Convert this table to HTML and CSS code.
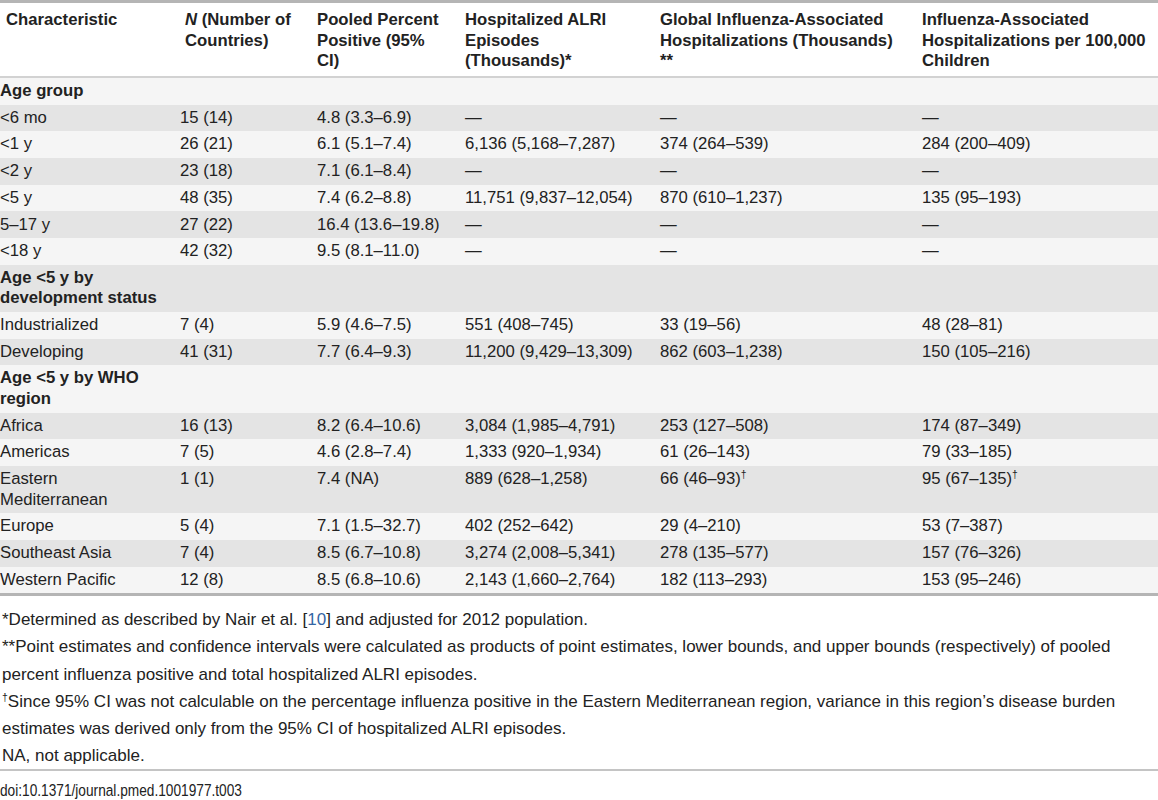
FILE: index.html
```html
<!DOCTYPE html>
<html lang="en">
<head>
    <meta charset="UTF-8">
    <meta name="viewport" content="width=device-width, initial-scale=1.0">
    <title>Table 3. Influenza-associated hospitalizations in children</title>
    <link rel="stylesheet" href="styles.css">
</head>
<body>
    <div class="table-wrap">
        <table class="data-table">
            <colgroup>
                <col class="col-char">
                <col class="col-n">
                <col class="col-pooled">
                <col class="col-alri">
                <col class="col-global">
                <col class="col-rate">
            </colgroup>
            <thead>
                <tr>
                    <th class="first">Characteristic</th>
                    <th class="second"><em>N</em> (Number of<br>Countries)</th>
                    <th>Pooled Percent<br>Positive (95%<br>CI)</th>
                    <th>Hospitalized ALRI<br>Episodes<br>(Thousands)*</th>
                    <th>Global Influenza-Associated<br>Hospitalizations (Thousands)<br>**</th>
                    <th>Influenza-Associated<br>Hospitalizations per 100,000<br>Children</th>
                </tr>
            </thead>
            <tbody>
                <tr class="group">
                    <td>Age group</td><td></td><td></td><td></td><td></td><td></td>
                </tr>
                <tr>
                    <td>&lt;6 mo</td><td>15 (14)</td><td>4.8 (3.3–6.9)</td><td>—</td><td>—</td><td>—</td>
                </tr>
                <tr>
                    <td>&lt;1 y</td><td>26 (21)</td><td>6.1 (5.1–7.4)</td><td>6,136 (5,168–7,287)</td><td>374 (264–539)</td><td>284 (200–409)</td>
                </tr>
                <tr>
                    <td>&lt;2 y</td><td>23 (18)</td><td>7.1 (6.1–8.4)</td><td>—</td><td>—</td><td>—</td>
                </tr>
                <tr>
                    <td>&lt;5 y</td><td>48 (35)</td><td>7.4 (6.2–8.8)</td><td>11,751 (9,837–12,054)</td><td>870 (610–1,237)</td><td>135 (95–193)</td>
                </tr>
                <tr>
                    <td>5–17 y</td><td>27 (22)</td><td>16.4 (13.6–19.8)</td><td>—</td><td>—</td><td>—</td>
                </tr>
                <tr>
                    <td>&lt;18 y</td><td>42 (32)</td><td>9.5 (8.1–11.0)</td><td>—</td><td>—</td><td>—</td>
                </tr>
                <tr class="group">
                    <td>Age &lt;5 y by development status</td><td></td><td></td><td></td><td></td><td></td>
                </tr>
                <tr>
                    <td>Industrialized</td><td>7 (4)</td><td>5.9 (4.6–7.5)</td><td>551 (408–745)</td><td>33 (19–56)</td><td>48 (28–81)</td>
                </tr>
                <tr>
                    <td>Developing</td><td>41 (31)</td><td>7.7 (6.4–9.3)</td><td>11,200 (9,429–13,309)</td><td>862 (603–1,238)</td><td>150 (105–216)</td>
                </tr>
                <tr class="group">
                    <td>Age &lt;5 y by WHO region</td><td></td><td></td><td></td><td></td><td></td>
                </tr>
                <tr>
                    <td>Africa</td><td>16 (13)</td><td>8.2 (6.4–10.6)</td><td>3,084 (1,985–4,791)</td><td>253 (127–508)</td><td>174 (87–349)</td>
                </tr>
                <tr>
                    <td>Americas</td><td>7 (5)</td><td>4.6 (2.8–7.4)</td><td>1,333 (920–1,934)</td><td>61 (26–143)</td><td>79 (33–185)</td>
                </tr>
                <tr>
                    <td>Eastern Mediterranean</td><td>1 (1)</td><td>7.4 (NA)</td><td>889 (628–1,258)</td><td>66 (46–93)<sup>†</sup></td><td>95 (67–135)<sup>†</sup></td>
                </tr>
                <tr>
                    <td>Europe</td><td>5 (4)</td><td>7.1 (1.5–32.7)</td><td>402 (252–642)</td><td>29 (4–210)</td><td>53 (7–387)</td>
                </tr>
                <tr>
                    <td>Southeast Asia</td><td>7 (4)</td><td>8.5 (6.7–10.8)</td><td>3,274 (2,008–5,341)</td><td>278 (135–577)</td><td>157 (76–326)</td>
                </tr>
                <tr>
                    <td>Western Pacific</td><td>12 (8)</td><td>8.5 (6.8–10.6)</td><td>2,143 (1,660–2,764)</td><td>182 (113–293)</td><td>153 (95–246)</td>
                </tr>
            </tbody>
        </table>

        <div class="footnotes">
            <p>*Determined as described by Nair et al. [<a href="#ref10">10</a>] and adjusted for 2012 population.</p>
            <p>**Point estimates and confidence intervals were calculated as products of point estimates, lower bounds, and upper bounds (respectively) of pooled percent influenza positive and total hospitalized ALRI episodes.</p>
            <p><sup>†</sup>Since 95% CI was not calculable on the percentage influenza positive in the Eastern Mediterranean region, variance in this region’s disease burden estimates was derived only from the 95% CI of hospitalized ALRI episodes.</p>
            <p>NA, not applicable.</p>
        </div>

        <div class="doi"><span class="doi-text">doi:10.1371/journal.pmed.1001977.t003</span></div>
    </div>
</body>
</html>
```

FILE: styles.css
```css
body {
    margin: 0;
    padding: 0;
    background-color: #fff;
    color: #222;
    font-family: "Liberation Sans", Arial, sans-serif;
}

.table-wrap {
    width: 1158px;
}

.data-table {
    width: 100%;
    table-layout: fixed;
    border-collapse: separate;
    border-spacing: 0;
    border-top: 3px solid #b5b5b5;
    border-bottom: 3px solid #b5b5b5;
    font-size: 16.7px;
    line-height: 20.5px;
}

.col-char { width: 180px; }
.col-n { width: 137px; }
.col-pooled { width: 148px; }
.col-alri { width: 195px; }
.col-global { width: 262px; }

.data-table th {
    text-align: left;
    vertical-align: top;
    font-weight: bold;
    padding: 7px 16px 4.5px 0;
    border-bottom: 2px solid #d2d2d2;
    background-color: #fff;
    white-space: nowrap;
}

.data-table th.first {
    padding-left: 6px;
}

.data-table th.second {
    padding-left: 5px;
}

.data-table th:last-child,
.data-table td:last-child {
    padding-right: 0;
}

.data-table th em {
    font-style: italic;
}

.data-table td {
    vertical-align: top;
    padding: 3.1px 16px 3.1px 0;
}

.data-table tbody tr:nth-child(odd) {
    background-color: #f5f5f5;
}

.data-table tbody tr:nth-child(even) {
    background-color: #e4e4e4;
}

.data-table tr.group td {
    font-weight: bold;
}

.data-table sup,
.footnotes sup {
    font-size: 0.62em;
    line-height: 0;
    vertical-align: 0.6em;
}

.footnotes {
    padding-top: 10px;
    border-bottom: 2px solid #c4c4c4;
    font-size: 17px;
    line-height: 27.2px;
}

.footnotes p {
    margin: 0;
    padding-left: 2px;
}

.footnotes a {
    color: #3465a4;
    text-decoration: none;
}

.doi {
    margin-top: 5.5px;
    font-size: 16.7px;
    line-height: 27px;
}

.doi-text {
    display: inline-block;
    transform: scaleX(0.82);
    transform-origin: left center;
}
```
